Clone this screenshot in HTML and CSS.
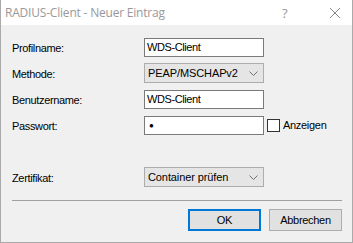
FILE: index.html
```html
<!DOCTYPE html>
<html lang="de">
<head>
    <meta charset="UTF-8">
    <title>RADIUS-Client - Neuer Eintrag</title>
    <link rel="stylesheet" href="styles.css">
</head>
<body>
    <div class="window">
        <div class="titlebar">
            <span class="title">RADIUS-Client - Neuer Eintrag</span>
            <span class="help">?</span>
            <span class="close">
                <svg width="12" height="12" viewBox="0 0 12 12"><path d="M1 1 L11 11 M11 1 L1 11" stroke="#8a8a8a" stroke-width="1" fill="none"/></svg>
            </span>
        </div>
        <div class="content">
            <div class="form">
                <label>Profilname:</label>
                <div class="field"><div class="input">WDS-Client</div></div>

                <label>Methode:</label>
                <div class="field">
                    <div class="select">
                        <span>PEAP/MSCHAPv2</span>
                        <svg class="chev" width="9" height="5" viewBox="0 0 9 5"><polyline points="0.5,0.5 4.5,4.5 8.5,0.5" stroke="#707070" fill="none"/></svg>
                    </div>
                </div>

                <label>Benutzername:</label>
                <div class="field"><div class="input">WDS-Client</div></div>

                <label>Passwort:</label>
                <div class="field">
                    <div class="input pw">&#9679;</div>
                    <span class="check"></span>
                    <span class="check-label">Anzeigen</span>
                </div>

                <div class="spacer"></div>
                <div class="spacer"></div>

                <label>Zertifikat:</label>
                <div class="field">
                    <div class="select">
                        <span>Container prüfen</span>
                        <svg class="chev" width="9" height="5" viewBox="0 0 9 5"><polyline points="0.5,0.5 4.5,4.5 8.5,0.5" stroke="#707070" fill="none"/></svg>
                    </div>
                </div>
            </div>
            <div class="separator"></div>
            <div class="buttons">
                <button class="btn default">OK</button>
                <button class="btn">Abbrechen</button>
            </div>
        </div>
    </div>
</body>
</html>
```

FILE: styles.css
```css
html, body {
    margin: 0;
    padding: 0;
    width: 353px;
    height: 243px;
    overflow: hidden;
    background: #f0f0f0;
    font-family: 'Liberation Sans', Arial, sans-serif;
    font-size: 11px;
    color: #000;
}
.window {
    width: 353px;
    height: 243px;
    box-sizing: border-box;
    border: 1px solid #aaaaaa;
    border-top: none;
    display: flex;
    flex-direction: column;
}
.titlebar {
    height: 25px;
    background: #fff;
    display: flex;
    align-items: center;
    padding-left: 4px;
    font-family: 'Open Sans', 'Noto Sans', sans-serif;
    font-size: 12px;
    color: #999999;
}
.title {
    flex: 1;
    letter-spacing: -0.2px;
}
.help {
    width: 14px;
    margin-right: 33px;
    font-size: 13px;
}
.close {
    width: 12px;
    height: 12px;
    margin-right: 11px;
    display: flex;
}
.content {
    flex: 1;
    padding: 12px 10px 0 11px;
}
.form {
    display: grid;
    grid-template-columns: 132px 1fr;
    grid-auto-rows: 20px;
    row-gap: 6px;
}
.form label {
    display: flex;
    align-items: center;
    letter-spacing: -0.35px;
    padding-top: 1px;
}
.field {
    display: flex;
    align-items: center;
}
.input {
    width: 120px;
    height: 19px;
    box-sizing: border-box;
    border: 1px solid #7a7a7a;
    background: #fff;
    padding-left: 2px;
    display: flex;
    align-items: center;
    letter-spacing: -0.4px;
}
.input.pw {
    font-size: 8px;
    padding-left: 4px;
}
.select {
    width: 120px;
    height: 20px;
    box-sizing: border-box;
    border: 1px solid #adadad;
    background: #e5e5e5;
    padding: 0 5px 0 3px;
    display: flex;
    align-items: center;
    justify-content: space-between;
    letter-spacing: -0.1px;
}
.chev {
    margin-top: 1px;
}
.check {
    width: 13px;
    height: 13px;
    box-sizing: border-box;
    border: 1px solid #333;
    background: #fff;
    margin-left: 3px;
}
.check-label {
    margin-left: 3px;
    letter-spacing: -0.3px;
}
.separator {
    height: 1px;
    background: #a0a0a0;
    margin-top: 13px;
}
.buttons {
    display: flex;
    justify-content: flex-end;
    gap: 8px;
    margin-top: 8px;
}
.btn {
    width: 73px;
    height: 22px;
    box-sizing: border-box;
    border: 1px solid #adadad;
    background: #e1e1e1;
    font-family: 'Liberation Sans', Arial, sans-serif;
    font-size: 11px;
    letter-spacing: -0.3px;
    padding: 0;
    color: #000;
}
.btn.default {
    border: 2px solid #0078d7;
}
```
